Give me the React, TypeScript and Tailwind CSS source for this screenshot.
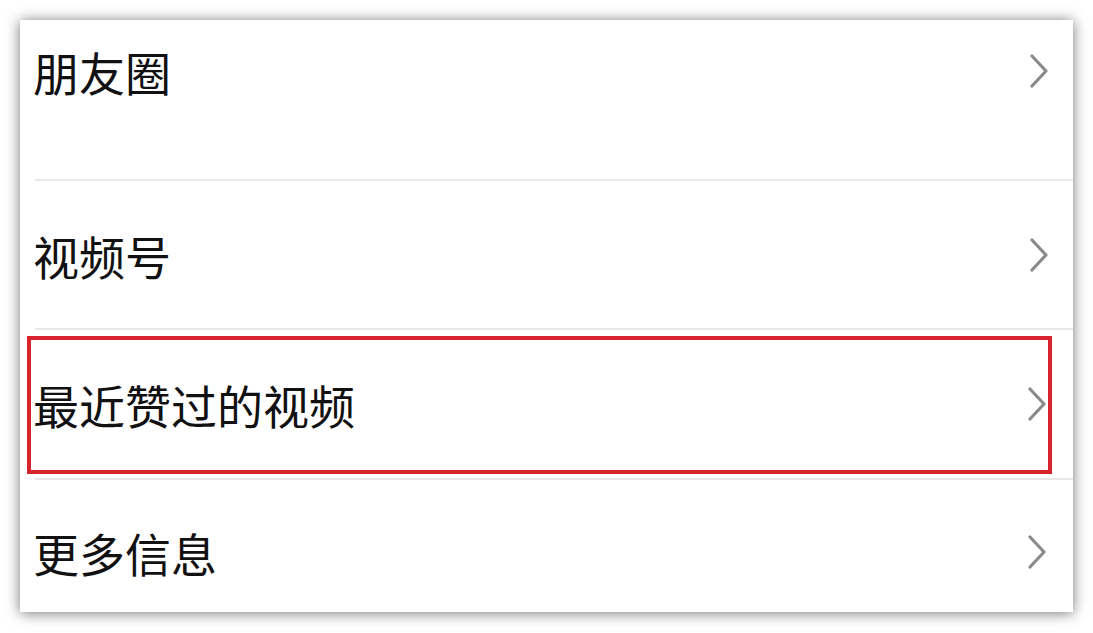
import React from "react";

function Chevron() {
  return (
    <svg width="20" height="34" viewBox="0 0 20 34" className="shrink-0">
      <polyline
        points="3,2 17,17 3,32"
        fill="none"
        stroke="#8a8a8a"
        strokeWidth="3.2"
        strokeLinecap="round"
        strokeLinejoin="round"
      />
    </svg>
  );
}

function Label({ children }: { children: React.ReactNode }) {
  return (
    <span
      className="text-[46px] leading-[46px] text-[#111] tracking-[0px]"
      style={{ fontFamily: '"Noto Sans CJK SC", "Noto Sans", sans-serif' }}
    >
      {children}
    </span>
  );
}

function Sep() {
  return <div className="ml-[15px] h-[2px] bg-[#e8e8e8]" />;
}

export default function App() {
  return (
    <div className="w-[1093px] h-[633px] bg-white pt-[20px] pl-[20px]">
      <div className="w-[1053px] h-[592px] bg-white shadow-[0_1px_13px_rgba(0,0,0,0.55)] flex flex-col overflow-hidden">
        <div className="h-[159px] pt-[28px] pl-[13px] pr-[24px]">
          <div className="flex items-center justify-between">
            <Label>朋友圈</Label>
            <Chevron />
          </div>
        </div>
        <Sep />
        <div className="h-[147px] flex items-center justify-between pl-[13px] pr-[24px]">
          <Label>视频号</Label>
          <Chevron />
        </div>
        <Sep />
        <div className="relative h-[148px] flex items-center justify-between pl-[13px] pr-[26px]">
          <Label>最近赞过的视频</Label>
          <Chevron />
          <div className="absolute left-[7px] right-[21px] top-[6px] bottom-[4px] border-[4px] border-[#d8232f]" />
        </div>
        <Sep />
        <div className="flex-1 flex items-center justify-between pt-[12px] pl-[13px] pr-[26px]">
          <Label>更多信息</Label>
          <Chevron />
        </div>
      </div>
    </div>
  );
}
